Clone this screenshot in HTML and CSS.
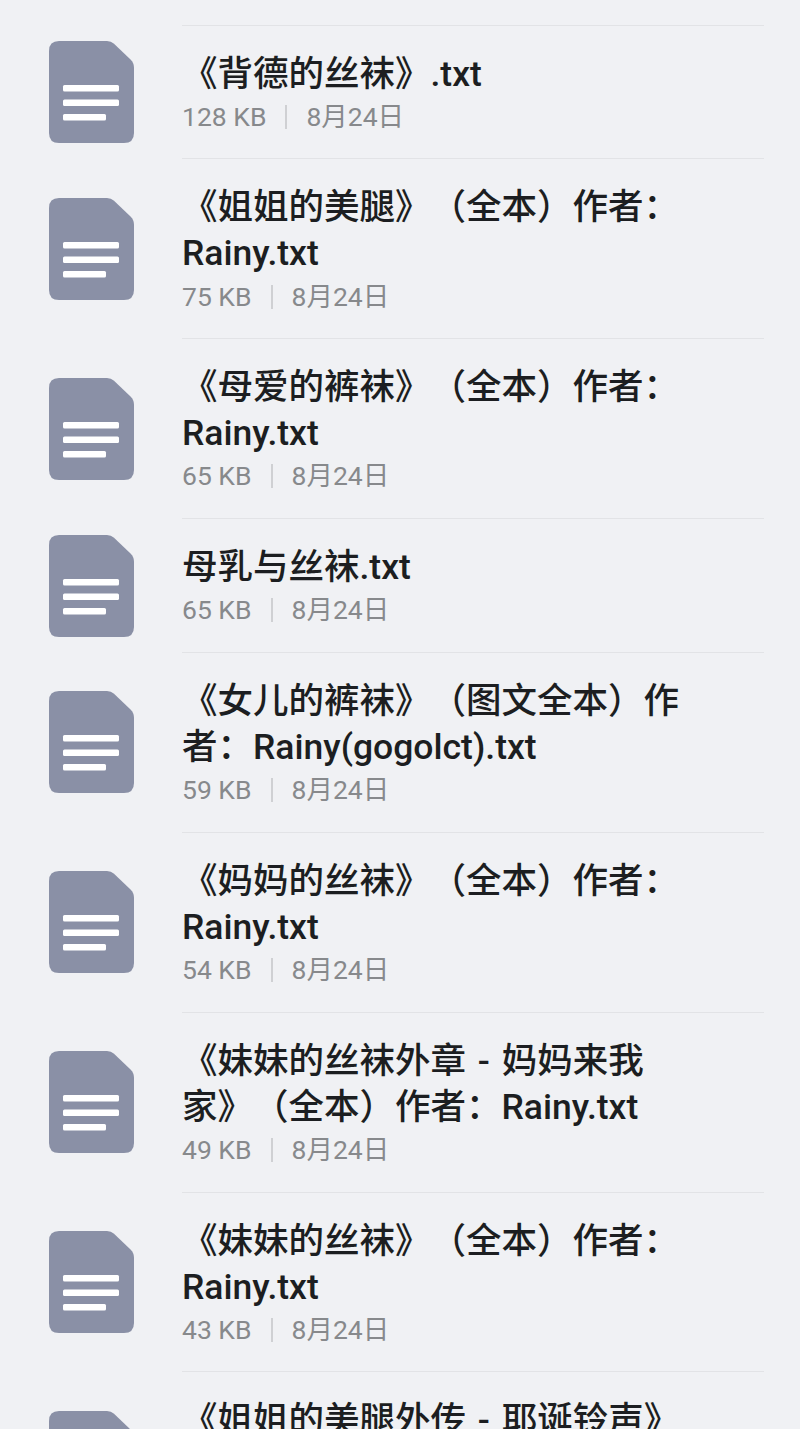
FILE: index.html
```html
<!DOCTYPE html>
<html lang="zh-CN">
  <head>
    <meta charset="UTF-8" />
    <meta name="viewport" content="width=device-width, initial-scale=1.0" />
    <title>文件列表</title>
    <link rel="stylesheet" href="styles.css">
  </head>
  <body>
    <svg class="sprite" width="0" height="0">
      <symbol id="doc" viewBox="0 0 85 102">
        <path fill="#8a90a6" d="M10 0H58Q62 0 65 2.700L81.500 18.500Q85 22 85 26.500V92Q85 102 75 102H10Q0 102 0 92V10Q0 0 10 0Z" />
        <rect fill="#fff" x="14" y="44" width="56" height="6.500" rx="1.500" />
        <rect fill="#fff" x="14" y="58.500" width="56" height="6.500" rx="1.500" />
        <rect fill="#fff" x="14" y="73" width="43" height="6.500" rx="1.500" />
      </symbol>
    </svg>

    <ul class="file-list">
      <li class="file-row">
        <svg class="file-icon"><use href="#doc" /></svg>
        <div class="file-info">
          <div class="file-name">《背德的丝袜》.txt</div>
          <div class="file-meta">128 KB<i class="sep"></i>8月24日</div>
        </div>
      </li>
      <li class="file-row">
        <svg class="file-icon"><use href="#doc" /></svg>
        <div class="file-info">
          <div class="file-name">《姐姐的美腿》（全本）作者：Rainy.txt</div>
          <div class="file-meta">75 KB<i class="sep"></i>8月24日</div>
        </div>
      </li>
      <li class="file-row">
        <svg class="file-icon"><use href="#doc" /></svg>
        <div class="file-info">
          <div class="file-name">《母爱的裤袜》（全本）作者：Rainy.txt</div>
          <div class="file-meta">65 KB<i class="sep"></i>8月24日</div>
        </div>
      </li>
      <li class="file-row">
        <svg class="file-icon"><use href="#doc" /></svg>
        <div class="file-info">
          <div class="file-name">母乳与丝袜.txt</div>
          <div class="file-meta">65 KB<i class="sep"></i>8月24日</div>
        </div>
      </li>
      <li class="file-row">
        <svg class="file-icon"><use href="#doc" /></svg>
        <div class="file-info">
          <div class="file-name">《女儿的裤袜》（图文全本）作者：Rainy(gogolct).txt</div>
          <div class="file-meta">59 KB<i class="sep"></i>8月24日</div>
        </div>
      </li>
      <li class="file-row">
        <svg class="file-icon"><use href="#doc" /></svg>
        <div class="file-info">
          <div class="file-name">《妈妈的丝袜》（全本）作者：Rainy.txt</div>
          <div class="file-meta">54 KB<i class="sep"></i>8月24日</div>
        </div>
      </li>
      <li class="file-row">
        <svg class="file-icon"><use href="#doc" /></svg>
        <div class="file-info">
          <div class="file-name">《妹妹的丝袜外章 - 妈妈来我家》（全本）作者：Rainy.txt</div>
          <div class="file-meta">49 KB<i class="sep"></i>8月24日</div>
        </div>
      </li>
      <li class="file-row">
        <svg class="file-icon"><use href="#doc" /></svg>
        <div class="file-info">
          <div class="file-name">《妹妹的丝袜》（全本）作者：Rainy.txt</div>
          <div class="file-meta">43 KB<i class="sep"></i>8月24日</div>
        </div>
      </li>
      <li class="file-row">
        <svg class="file-icon"><use href="#doc" /></svg>
        <div class="file-info">
          <div class="file-name">《姐姐的美腿外传 - 耶诞铃声》（全本）作者：Rainy.txt</div>
          <div class="file-meta">38 KB<i class="sep"></i>8月24日</div>
        </div>
      </li>
    </ul>
  </body>
</html>
```

FILE: styles.css
```css
html,
body {
  height: 100%;
}

body {
  margin: 0;
  overflow: hidden;
  background: #f0f1f4;
  color: #1c1e21;
  font-family: Roboto, "Noto Sans CJK SC", sans-serif;
}

.sprite {
  display: block;
}

.file-list {
  list-style: none;
  margin: 0;
  padding: 24.600px 36px 0 49px;
}

.file-row {
  display: flex;
  align-items: center;
}

.file-icon {
  flex: none;
  width: 85px;
  height: 102px;
  margin-top: 1px;
  margin-right: 48px;
}

.file-info {
  flex: 1;
  min-width: 0;
  padding: 25px 64px 22px 0;
  border-top: 1px solid #e2e3e6;
}

.file-name {
  margin-bottom: 1px;
  font-size: 35.500px;
  line-height: 46.100px;
  font-weight: 500;
  word-spacing: 3px;
  text-spacing-trim: space-all;
}

.file-meta {
  height: 38.700px;
  font-size: 26.500px;
  line-height: 38.700px;
  color: #87898c;
}

.sep {
  display: inline-block;
  vertical-align: -3px;
  width: 2px;
  height: 24px;
  margin: 0 19px;
  background: #cfd0d3;
}
```
